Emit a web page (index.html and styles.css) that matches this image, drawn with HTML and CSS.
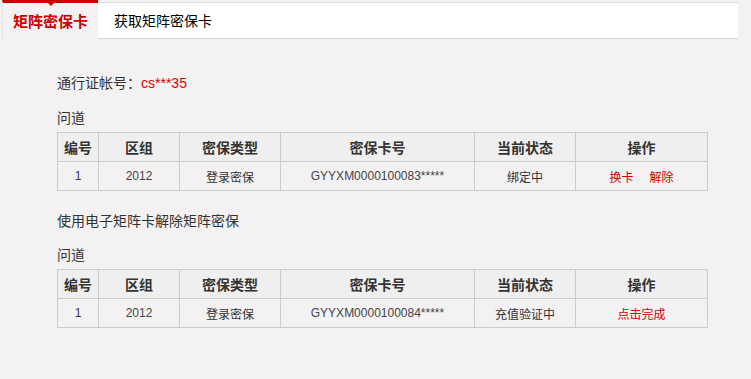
FILE: index.html
```html
<!DOCTYPE html>
<html lang="zh">
<head>
<meta charset="utf-8">
<link rel="stylesheet" href="styles.css">
</head>
<body>
<div class="tabs">
  <div class="tab active">矩阵密保卡<span class="arrow"></span></div>
  <div class="tab-rest"><span class="tab">获取矩阵密保卡</span></div>
</div>
<div class="content">
  <p class="account">通行证帐号：<span class="red">cs***35</span></p>
  <p class="label">问道</p>
  <table class="grid">
    <thead>
      <tr><th class="c1">编号</th><th class="c2">区组</th><th class="c3">密保类型</th><th class="c4">密保卡号</th><th class="c5">当前状态</th><th class="c6">操作</th></tr>
    </thead>
    <tbody>
      <tr><td class="num">1</td><td class="lat">2012</td><td>登录密保</td><td class="lat">GYYXM0000100083*****</td><td>绑定中</td><td><a class="op">换卡</a><a class="op">解除</a></td></tr>
    </tbody>
  </table>
  <p class="section">使用电子矩阵卡解除矩阵密保</p>
  <p class="label">问道</p>
  <table class="grid">
    <thead>
      <tr><th class="c1">编号</th><th class="c2">区组</th><th class="c3">密保类型</th><th class="c4">密保卡号</th><th class="c5">当前状态</th><th class="c6">操作</th></tr>
    </thead>
    <tbody>
      <tr><td class="num">1</td><td class="lat">2012</td><td>登录密保</td><td class="lat">GYYXM0000100084*****</td><td>充值验证中</td><td><a class="op">点击完成</a></td></tr>
    </tbody>
  </table>
</div>
</body>
</html>
```
FILE: styles.css
```css
html, body {
  margin: 0;
  padding: 0;
  background: #f3f1f2;
  font-family: "Noto Sans CJK SC", "Liberation Sans", sans-serif;
  color: #333;
}
.tabs {
  display: flex;
  padding-left: 2px;
  width: 736px;
  height: 39px;
}
.tab {
  font-size: 14px;
  line-height: 36px;
}
.tab.active {
  position: relative;
  width: 96px;
  box-sizing: border-box;
  border-top: 3px solid #cc0000;
  border-left: 1px solid #e2e0e0;
  color: #cc0000;
  font-size: 15px;
  font-weight: bold;
  text-align: center;
}
.arrow {
  position: absolute;
  top: 0;
  left: 45px;
  width: 0;
  height: 0;
  border-left: 3px solid transparent;
  border-right: 3px solid transparent;
  border-top: 3px solid #cc0000;
}
.tab-rest {
  flex: 1;
  margin-top: 2px;
  height: 35px;
  background: #fff;
  border-top: 1px solid #e0e0e0;
  border-bottom: 1px solid #d6d6d6;
  padding-left: 16px;
  color: #000;
}
.tab-rest .tab {
  line-height: 35px;
}
.content {
  padding: 33px 0 0 57px;
}
p {
  margin: 0;
  font-size: 14px;
  line-height: 20px;
}
.red {
  color: #dd0000;
  font-family: "Liberation Sans", sans-serif;
}
.label {
  margin-top: 14px;
  margin-bottom: 5px;
}
.section {
  margin-top: 19px;
}
.grid {
  border-collapse: collapse;
  width: 651px;
  font-size: 12px;
}
.grid th, .grid td {
  border: 1px solid #cbcbcb;
  text-align: center;
  padding: 0;
  height: 28px;
}
.grid th {
  background: #f0efef;
  font-size: 14px;
  font-weight: bold;
  color: #333;
}
.c1 { width: 40px; }
.c2 { width: 80px; }
.c3 { width: 100px; }
.c4 { width: 193px; }
.c5 { width: 100px; }
.lat {
  font-family: "Liberation Sans", sans-serif;
  color: #444;
}
.num {
  font-family: "Liberation Sans", sans-serif;
  color: #333366;
}
.op {
  color: #cc0000;
  margin: 0 8px;
}
```
